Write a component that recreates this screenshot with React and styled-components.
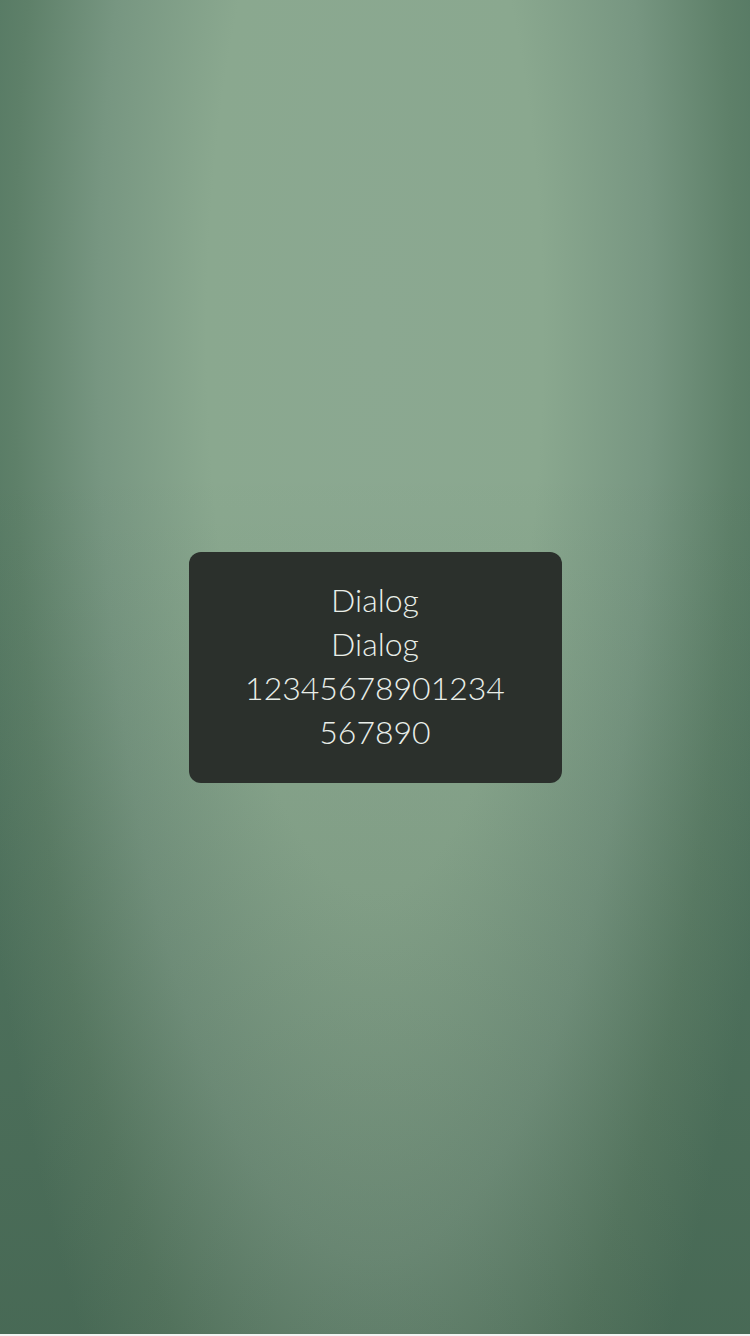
import styled, { createGlobalStyle } from "styled-components";

const GlobalStyle = createGlobalStyle`
  html, body {
    margin: 0;
    padding: 0;
    background: #f2f2f2;
  }
  body {
    font-family: Lato, "Noto Sans", sans-serif;
  }
`;

const Screen = styled.div`
  position: relative;
  width: 750px;
  height: 1334px;
  display: flex;
  align-items: center;
  justify-content: center;
  background:
    linear-gradient(180deg, rgba(0, 0, 0, 0) 0%, rgba(0, 0, 0, 0) 35%, rgba(20, 40, 25, 0.16) 100%),
    radial-gradient(ellipse 420px 1400px at 50% 25%, #8ba891 0%, #8aa88f 40%, #779681 66%, #5e8069 86%, #527661 100%);
  background-color: #5a7d66;
`;

const Dialog = styled.div`
  width: 373px;
  box-sizing: border-box;
  padding: 26px 50px 29px;
  background: #2b302c;
  border-radius: 12px;
  color: #e9eee9;
  font-family: Lato, "Noto Sans", sans-serif;
  font-size: 32px;
  font-weight: 300;
  line-height: 44px;
  text-align: center;
  word-break: break-all;
`;

const Line = styled.div`
  white-space: normal;
`;

export default function App() {
  return (
    <>
      <GlobalStyle />
      <Screen>
        <Dialog>
          <Line>Dialog</Line>
          <Line>Dialog</Line>
          <Line>12345678901234567890</Line>
        </Dialog>
      </Screen>
    </>
  );
}
